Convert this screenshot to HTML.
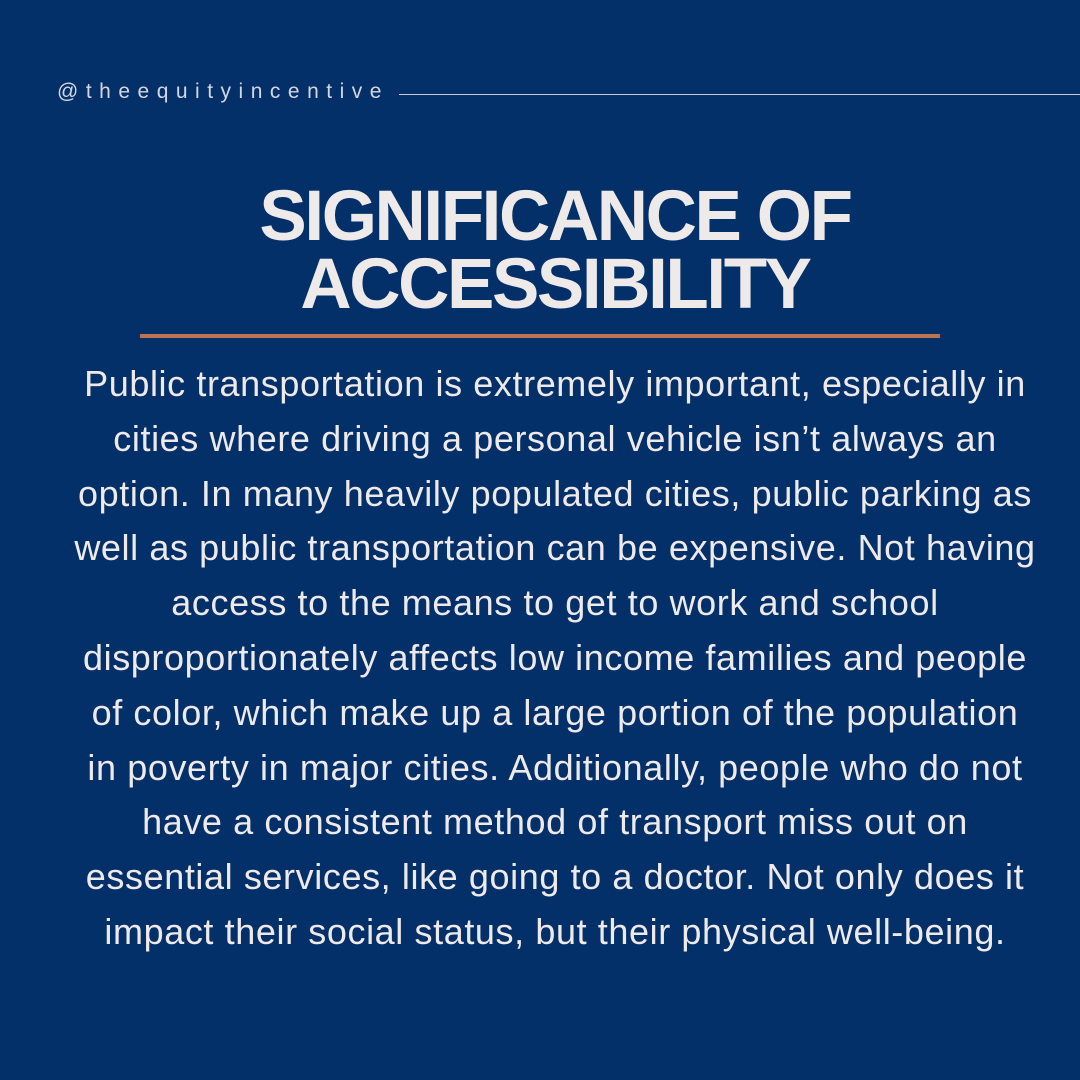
<!DOCTYPE html>
<html><head><meta charset="utf-8"><style>
html,body{margin:0;padding:0}
body{width:1080px;height:1080px;background:#033068;position:relative;overflow:hidden;font-family:"Liberation Sans",sans-serif;color:#efeaea}
.handle{position:absolute;left:57px;top:80px;font-size:21px;letter-spacing:7.5px;color:#d4d6e0}
.hline{position:absolute;left:399px;top:94px;width:681px;height:1px;background:#c9ccd8}
.title{position:absolute;left:15px;width:1080px;top:183px;text-align:center;font-weight:bold;font-size:71px;line-height:68px;letter-spacing:-2.4px}
.rule{position:absolute;left:140px;top:334px;width:800px;height:4px;background:#bd7455}
.body{position:absolute;left:15px;width:1080px;top:357px;text-align:center;font-size:36px;line-height:54.8px;letter-spacing:0.6px;white-space:nowrap}
</style></head><body>
<div class="handle">@theequityincentive</div>
<div class="hline"></div>
<div class="title">SIGNIFICANCE OF<br>ACCESSIBILITY</div>
<div class="rule"></div>
<div class="body">
<div>Public transportation is extremely important, especially in</div>
<div>cities where driving a personal vehicle isn’t always an</div>
<div>option. In many heavily populated cities, public parking as</div>
<div>well as public transportation can be expensive. Not having</div>
<div>access to the means to get to work and school</div>
<div>disproportionately affects low income families and people</div>
<div>of color, which make up a large portion of the population</div>
<div>in poverty in major cities. Additionally, people who do not</div>
<div>have a consistent method of transport miss out on</div>
<div>essential services, like going to a doctor. Not only does it</div>
<div>impact their social status, but their physical well-being.</div>
</div>
</body></html>
